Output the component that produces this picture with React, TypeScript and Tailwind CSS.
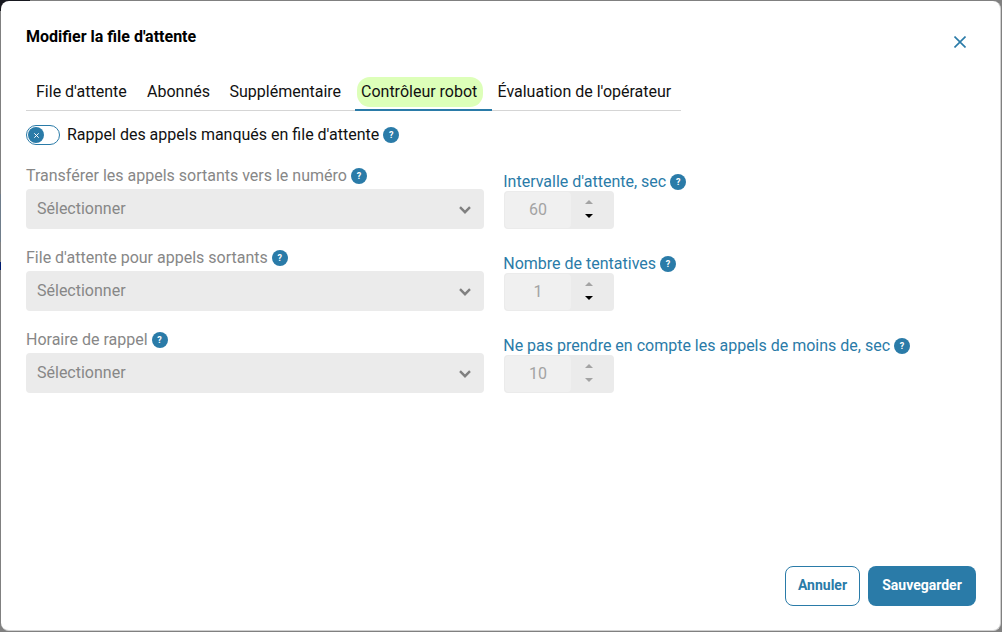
import type { ReactNode } from "react";

const tabs = [
  { label: "File d'attente", box: "w-[111px] pl-2.5" },
  { label: "Abonnés", box: "w-[82px] pl-2.5" },
  { label: "Supplémentaire", box: "w-[136px] pl-[10.5px]" },
  { label: "Contrôleur robot", box: "w-[137px] pl-0.5", active: true },
  { label: "Évaluation de l'opérateur", box: "w-[189px] pl-[5.5px]" },
];

const selects = ["Transférer les appels sortants vers le numéro", "File d'attente pour appels sortants", "Horaire de rappel"];

const counters = [
  { label: "Intervalle d'attente, sec", value: 60, canDecrease: true },
  { label: "Nombre de tentatives", value: 1, canDecrease: true },
  { label: "Ne pas prendre en compte les appels de moins de, sec", value: 10, canDecrease: false },
];

const Help = () => (
  <span className="flex size-4 shrink-0 items-center justify-center rounded-full bg-[#2a7ba8] text-[9px] leading-none font-bold text-white">?</span>
);

const Label = ({ children }: { children: ReactNode }) => (
  <div className="flex h-6 items-center gap-1 whitespace-nowrap">
    <span>{children}</span>
    <Help />
  </div>
);

const SelectField = ({ label }: { label: string }) => (
  <div className="h-[82px] text-[#878787]">
    <Label>{label}</Label>
    <button disabled className="mt-px flex h-10 w-full items-center justify-between rounded bg-[#ebebeb] pr-[13px] pb-[1px] pl-[11px]">
      <span>Sélectionner</span>
      <svg className="mt-[2px] h-[8px] w-[12px]" viewBox="0 0 12 8" fill="none" stroke="#808080" strokeWidth="2.4">
        <path d="M1 1.2 6 6.2 11 1.2" />
      </svg>
    </button>
  </div>
);

const NumberField = ({ label, value, canDecrease }: { label: string; value: number; canDecrease: boolean }) => (
  <div className="h-[82px] text-[#2a7ba8]">
    <div className="-ml-[0.75px]">
      <Label>{label}</Label>
    </div>
    <div className="mt-[-3px] flex h-[38px] w-[110px] rounded bg-[#ebebeb] p-px text-[#a3a3a3]">
      <div className="flex w-[66px] items-center justify-center rounded bg-[#f0f0f0]">{value}</div>
      <div className="flex w-9 flex-col items-center justify-center gap-[10px] pb-0.5">
        <svg className="h-1 w-2" viewBox="0 0 8 4" fill="#a3a3a3">
          <path d="M0 4 4 0 8 4Z" />
        </svg>
        <svg className="h-1 w-2" viewBox="0 0 8 4" fill={canDecrease ? "#000" : "#a3a3a3"}>
          <path d="M0 0h8L4 4Z" />
        </svg>
      </div>
    </div>
  </div>
);

const App = () => (
  <div className="h-[632px] w-[1002px] bg-[linear-gradient(to_right,#17181f_0_30px,transparent_30px),linear-gradient(#808080_0_194px,#6f7d8b_194px_242px,#808080_242px_262px,#001d70_262px_270px,#808080_270px),linear-gradient(#808080,#808080)] bg-[length:30px_11px,1px_100%,100%_100%] bg-no-repeat p-px font-[Roboto,sans-serif] text-base leading-6">
    <div className="flex h-[630px] w-[1000px] flex-col rounded-lg border-r border-b border-[#d0d0d0] bg-white px-[25px] pb-6">
      <header className="flex h-[76px] justify-between">
        <h1 className="mt-[24px] font-bold text-black">Modifier la file d'attente</h1>
        <button aria-label="Fermer" className="mt-[35px] mr-[9px] size-3">
          <svg className="size-3" viewBox="0 0 12 12" stroke="#2a7ba8" strokeWidth="1.6">
            <path d="M.5.5 11.5 11.5M11.5.5.5 11.5" />
          </svg>
        </button>
      </header>

      <nav className="flex h-[34px] w-[655px] text-[#111]">
        {tabs.map((t) => (
          <div key={t.label} className={`h-[34px] shrink-0 whitespace-nowrap ${t.box} ${t.active ? "border-b-2 border-[#2a7ba8]" : "border-b border-[#d5d5d5]"}`}>
            <span className={t.active ? "flex h-[30px] w-[126px] items-center rounded-[13px] bg-[#ddffb9] pl-1" : "flex h-[30px] items-center"}>{t.label}</span>
          </div>
        ))}
      </nav>

      <div className="mt-[12px] flex h-6 items-center text-[#111]">
        <button role="switch" aria-checked="false" aria-label="Rappel des appels manqués" className="mr-[7px] flex h-5 w-[34px] items-center rounded-full border border-[#2a7ba8] pl-px">
          <span className="flex size-4 items-center justify-center rounded-full bg-[#2a7ba8]">
            <svg className="size-[5px]" viewBox="0 0 5 5" stroke="#fff" strokeWidth="1">
              <path d="M.3.3 4.7 4.7M4.7.3.3 4.7" />
            </svg>
          </span>
        </button>
        <Label>Rappel des appels manqués en file d'attente</Label>
      </div>

      <div className="mt-[17px] flex gap-5">
        <section className="w-[458px]">
          {selects.map((label) => (
            <SelectField key={label} label={label} />
          ))}
        </section>
        <section className="mt-[6px]">
          {counters.map((c) => (
            <NumberField key={c.label} {...c} />
          ))}
        </section>
      </div>

      <footer className="mt-auto -mr-px flex justify-end gap-2 text-sm font-bold">
        <button className="h-10 w-[75px] rounded-lg border border-[#2a7ba8] pb-0.5 text-[#2a7ba8]">Annuler</button>
        <button className="h-10 w-[108px] rounded-lg bg-[#2a7ba8] pb-0.5 text-white">Sauvegarder</button>
      </footer>
    </div>
  </div>
);

export default App;
